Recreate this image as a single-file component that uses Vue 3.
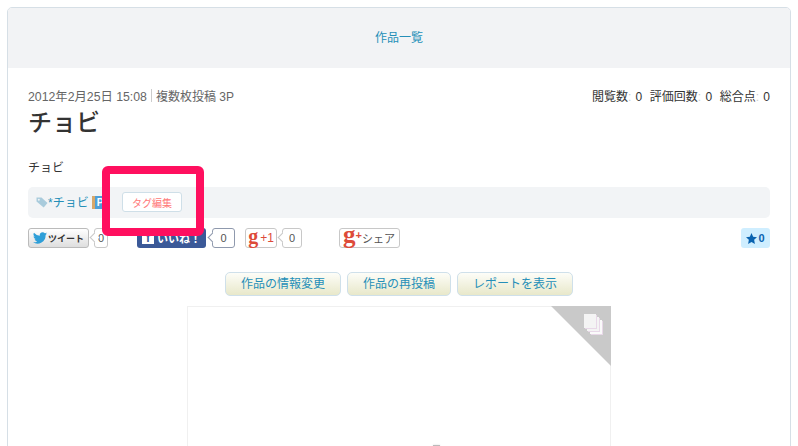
<script setup>
const actions = ['作品の情報変更', '作品の再投稿', 'レポートを表示']
</script>

<template>
  <div class="page">
    <section class="card">
      <header class="card-head"><a class="link">作品一覧</a></header>
      <div class="card-body">
        <div class="meta-row">
          <div class="meta"><span class="date">2012年2月25日 15:08</span><span class="sep"></span>複数枚投稿 3P</div>
          <ul class="stats">
            <li>閲覧数<i>:</i> 0</li>
            <li>評価回数<i>:</i> 0</li>
            <li>総合点<i>:</i> 0</li>
          </ul>
        </div>
        <h1 class="title">チョビ</h1>
        <p class="desc">チョビ</p>
        <div class="tags">
          <svg class="tag-icon" width="12" height="11" viewBox="0 0 12 11"><path d="M0.500 0.500h5l6 5.500-3.800 4.500L0.500 4.500z" fill="#a9cbdc"/><circle cx="2.800" cy="2.800" r="1" fill="#eef3f6"/></svg>
          <a class="link tag-name">*チョビ</a>
          <span class="dic"><span class="dic-ring"></span><b>P</b></span>
          <button class="tag-edit">タグ編集</button>
        </div>
        <div class="social">
          <div class="sns sns-tw">
            <span class="sbtn tw">
              <svg width="14" height="12" viewBox="0 0 24 20"><path d="M24 2.400a9.800 9.800 0 0 1-2.800.8A4.900 4.900 0 0 0 23.300.5a9.800 9.800 0 0 1-3.100 1.200 4.900 4.900 0 0 0-8.400 4.500A14 14 0 0 1 1.700 1a4.900 4.900 0 0 0 1.500 6.600 4.900 4.900 0 0 1-2.200-.6c0 2.400 1.700 4.400 3.900 4.900a4.900 4.900 0 0 1-2.200.1 4.900 4.900 0 0 0 4.600 3.400A9.900 9.900 0 0 1 0 17.400 14 14 0 0 0 21.600 5a10 10 0 0 0 2.400-2.600z" fill="#2f9fd8"/></svg>
              <b>ツイート</b>
            </span>
            <span class="bubble narrow">0</span>
          </div>
          <div class="sns sns-fb">
            <span class="sbtn fb"><span class="f">f</span><b>いいね！</b></span>
            <span class="bubble dark">0</span>
          </div>
          <div class="sns sns-gp">
            <span class="sbtn gp"><span class="g">g</span><span class="plus">+1</span></span>
            <span class="bubble short">0</span>
          </div>
          <span class="sbtn share"><span class="g big">g</span><span class="plus-s">+</span><span class="share-t">シェア</span></span>
          <span class="star">
            <svg width="11" height="11" viewBox="0 0 20 20"><path d="M10 0l3 6.700 7 .8-5.200 4.800L16.200 20 10 16.200 3.800 20l1.400-7.700L0 7.500l7-.8z" fill="#0a63b0"/></svg>
            <b>0</b>
          </span>
        </div>
        <div class="actions">
          <a v-for="a in actions" :key="a" class="act">{{ a }}</a>
        </div>
        <div class="work">
          <div class="corner"></div>
          <div class="pages">
            <span class="sheet s3"></span>
            <span class="sheet s2"></span>
            <span class="sheet s1"></span>
          </div>
          <div class="spinner"></div>
        </div>
      </div>
    </section>
    <div class="mark"></div>
  </div>
</template>

<style scoped>
.page {
  position: relative;
  width: 798px;
  height: 446px;
  overflow: hidden;
  padding: 7px 7px 0;
  box-sizing: border-box;
  background: #fff;
  font-family: "Liberation Sans", "Noto Sans CJK JP", sans-serif;
  font-size: 12px;
  color: #333;
}
.card {
  width: 784px;
  height: 460px;
  box-sizing: border-box;
  border: 1px solid #d6dfe6;
  border-radius: 5px;
  overflow: hidden;
}
.card-head {
  box-sizing: border-box;
  height: 60px;
  padding-bottom: 3px;
  background: #f2f3f5;
  display: flex;
  align-items: center;
  justify-content: center;
}
.link { color: #258fb8; }
.card-body { padding: 18px 20px 0; }
.meta-row {
  display: flex;
  justify-content: space-between;
  align-items: center;
  height: 18px;
}
.meta { color: #666; display: flex; align-items: center; margin-top: 1px; }
.date { font-size: 12.300px; }
.sep {
  display: inline-block;
  width: 1px;
  height: 13px;
  background: #ccc;
  margin: 0 4px;
}
.stats {
  list-style: none;
  display: flex;
  gap: 7.500px;
  margin: 0;
  padding: 0;
}
.stats i { font-style: normal; color: #ccc; margin-right: 1px; }
.title {
  margin: 4px 0 0;
  font-size: 24px;
  line-height: 30px;
  font-weight: 500;
  color: #333;
}
.desc { margin: 20px 0 0; line-height: 20px; }
.tags {
  box-sizing: border-box;
  margin-top: 9px;
  height: 31px;
  padding: 0 0 1px 8px;
  background: #f2f4f6;
  border-radius: 5px;
  display: flex;
  align-items: center;
}
.tag-icon { flex: none; }
.tag-name { width: 42px; flex: none; margin-top: -1px; }
.dic {
  position: relative;
  width: 13px;
  height: 13px;
  margin-left: 2px;
  background: #4f9fd8;
  color: #fff;
  font-size: 10px;
  line-height: 13px;
  text-align: center;
  border-radius: 1px;
  flex: none;
}
.dic b { display: block; padding-left: 3px; }
.dic-ring {
  position: absolute;
  left: 0;
  top: 0;
  bottom: 0;
  width: 3px;
  background: #d8a86a;
}
.tag-edit {
  margin-left: 17px;
  width: 60px;
  height: 20px;
  padding: 0;
  background: #fff;
  border: 1px solid #cfdfe8;
  border-radius: 3px;
  color: #f77;
  font: inherit;
  font-size: 10px;
}
.social {
  margin-top: 10px;
  height: 20px;
  display: flex;
  align-items: center;
}
.sns { display: flex; align-items: center; }
.sns-tw { width: 109px; gap: 5px; }
.sns-fb { width: 108px; gap: 6px; }
.sns-gp { width: 94px; gap: 5px; }
.sbtn {
  box-sizing: border-box;
  height: 20px;
  border-radius: 3px;
  display: inline-flex;
  align-items: center;
  flex: none;
}
.tw {
  width: 61px;
  padding-left: 4px;
  gap: 1px;
  border: 1px solid #bbb;
  background: linear-gradient(#fff, #dedede);
  color: #333;
  font-size: 9px;
}
.tw svg { flex: none; }
.tw b, .fb b { white-space: nowrap; }
.fb {
  width: 69px;
  padding-left: 5px;
  gap: 3px;
  background: #3b5998;
  color: #fff;
  font-size: 11px;
}
.f {
  width: 12px;
  height: 12px;
  background: #fff;
  color: #3b5998;
  font-weight: 700;
  font-size: 12px;
  line-height: 13px;
  text-align: center;
  flex: none;
}
.bubble {
  position: relative;
  box-sizing: border-box;
  width: 23px;
  height: 20px;
  border: 1px solid #c8c8c8;
  border-radius: 3px;
  background: #fff;
  font-size: 11px;
  line-height: 18px;
  text-align: center;
  color: #555;
}
.bubble.narrow { width: 14px; }
.bubble.short { width: 20px; }
.bubble.dark { border-color: #8f99ad; }
.bubble::before {
  content: "";
  position: absolute;
  left: -4px;
  top: 5px;
  width: 6px;
  height: 6px;
  background: #fff;
  border-left: 1px solid #c8c8c8;
  border-bottom: 1px solid #c8c8c8;
  transform: rotate(45deg);
}
.bubble.dark::before { border-color: #8f99ad; }
.gp {
  width: 32px;
  border: 1px solid #c8c8c8;
  background: #fff;
  justify-content: center;
  gap: 2px;
}
.g {
  font-family: "Liberation Serif", serif;
  font-weight: 700;
  font-size: 20px;
  line-height: 14px;
  color: #dd4b39;
  position: relative;
  top: -2px;
}
.g.big { font-size: 25px; top: -3px; }
.plus { color: #dd4b39; font-size: 12px; }
.plus-s { color: #dd4b39; font-weight: 700; font-size: 11px; position: relative; top: -3px; }
.share {
  width: 61px;
  border: 1px solid #c8c8c8;
  background: #fff;
  padding-left: 3px;
}
.share-t { color: #555; font-size: 11px; white-space: nowrap; }
.star {
  margin-left: auto;
  box-sizing: border-box;
  width: 29px;
  height: 20px;
  background: #cfeeff;
  border-radius: 3px;
  display: flex;
  align-items: center;
  justify-content: center;
  gap: 1px;
  color: #0a63b0;
  font-size: 11px;
}
.actions {
  margin-top: 24px;
  display: flex;
  justify-content: center;
  gap: 6px;
}
.act {
  box-sizing: border-box;
  height: 24px;
  padding: 0 15px;
  border: 1px solid #cfe0ea;
  border-radius: 5px;
  background: linear-gradient(#fdfdf8, #e8e8ca);
  color: #258fb8;
  font-size: 12px;
  line-height: 23px;
  white-space: nowrap;
}
.work {
  position: relative;
  width: 424px;
  height: 200px;
  box-sizing: border-box;
  margin: 10px auto 0;
  border: 1px solid #f0f0f0;
  background: #fff;
}
.corner {
  position: absolute;
  right: -1px;
  top: -1px;
  width: 0;
  height: 0;
  border-left: 60px solid transparent;
  border-top: 60px solid #c9c9c9;
}
.pages { position: absolute; right: 8px; top: 7px; width: 18px; height: 20px; }
.sheet {
  position: absolute;
  width: 12px;
  height: 14px;
  background: #f4f4f4;
  box-shadow: 1px 1px 0 #e8d8e8;
}
.s1 { left: 0; top: 0; }
.s2 { left: 3px; top: 3px; }
.s3 { left: 6px; top: 6px; background: #fafafa; }
.spinner {
  position: absolute;
  left: 245px;
  top: 138px;
  width: 7px;
  height: 1px;
  background: #bbb;
  box-shadow: 0 0 2px #ccc;
}
.mark {
  position: absolute;
  left: 102px;
  top: 166px;
  width: 102px;
  height: 70px;
  box-sizing: border-box;
  border: 8px solid #ff0f5f;
  border-radius: 6px;
}
</style>
